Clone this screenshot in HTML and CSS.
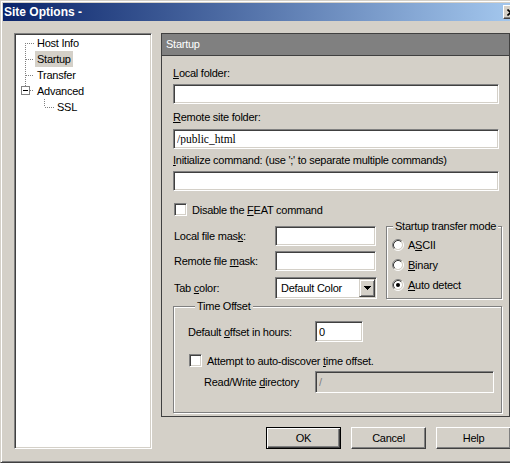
FILE: index.html
```html
<!DOCTYPE html>
<html>
<head>
<meta charset="utf-8">
<title>Site Options</title>
<link rel="stylesheet" href="styles.css">
</head>
<body>
<div class="window">
  <div class="titlebar">
    <span class="title">Site Options -</span>
    <span class="close"><svg width="8" height="7" viewBox="0 0 8 7"><path d="M0.5 0.5L7 6.5M7 0.5L0.5 6.5" stroke="#000" stroke-width="1.6" fill="none"/></svg></span>
  </div>
  <div class="main">
    <div class="tree">
      <div class="node">
        <svg class="gut" width="19" height="16" viewBox="0 0 19 16"><path d="M9.5 8V16M9 8.5H18" stroke="#808080" stroke-dasharray="1 1" fill="none" shape-rendering="crispEdges"/></svg>
        <span class="lbl">Host Info</span>
      </div>
      <div class="node">
        <svg class="gut" width="19" height="16" viewBox="0 0 19 16"><path d="M9.5 0V16M10 8.5H18" stroke="#808080" stroke-dasharray="1 1" fill="none" shape-rendering="crispEdges"/></svg>
        <span class="lbl sel">Startup</span>
      </div>
      <div class="node">
        <svg class="gut" width="19" height="16" viewBox="0 0 19 16"><path d="M9.5 0V16M10 8.5H18" stroke="#808080" stroke-dasharray="1 1" fill="none" shape-rendering="crispEdges"/></svg>
        <span class="lbl">Transfer</span>
      </div>
      <div class="node">
        <svg class="gut" width="19" height="16" viewBox="0 0 19 16"><path d="M9.5 0V3M14 7.5H18" stroke="#808080" stroke-dasharray="1 1" fill="none" shape-rendering="crispEdges"/><rect x="5.5" y="3.5" width="8" height="8" fill="#fff" stroke="#808080" shape-rendering="crispEdges"/><path d="M7 7.5H12" stroke="#000" shape-rendering="crispEdges"/></svg>
        <span class="lbl">Advanced</span>
      </div>
      <div class="node">
        <svg class="gut" width="39" height="16" viewBox="0 0 39 16"><path d="M28.5 0V8M29 8.5H38" stroke="#808080" stroke-dasharray="1 1" fill="none" shape-rendering="crispEdges"/></svg>
        <span class="lbl">SSL</span>
      </div>
    </div>

    <div class="right">
      <div class="panel">
        <div class="caption">Startup</div>
        <div class="pbody">
          <div class="lab l1"><u>L</u>ocal folder:</div>
          <input class="edit e1" type="text" value="">
          <div class="lab l2"><u>R</u>emote site folder:</div>
          <input class="edit e2 serif" type="text" value="/public_html">
          <div class="lab l3"><u>I</u>nitialize command: (use ';' to separate multiple commands)</div>
          <input class="edit e3" type="text" value="">

          <div class="chkrow feat"><span class="chk"></span><span>Disable the <u>F</u>EAT command</span></div>

          <div class="mid">
            <div class="masks">
              <div class="mlab">Local file mas<u>k</u>:</div>
              <input class="edit mask" type="text" value="">
              <div class="mlab">Remote file <u>m</u>ask:</div>
              <input class="edit mask" type="text" value="">
              <div class="mlab last">Tab <u>c</u>olor:</div>
              <div class="combo last">
                <span class="ctext">Default Color</span>
                <span class="cbtn"><svg width="7" height="4" viewBox="0 0 7 4"><path d="M0 0H7V1H6V2H5V3H4V4H3V3H2V2H1V1H0Z" fill="#000"/></svg></span>
              </div>
            </div>
            <fieldset class="group transfer">
              <legend>Startup transfer mode</legend>
              <div class="radrow first">
                <svg class="radio" width="12" height="12" viewBox="0 0 12 12"><circle cx="6" cy="6" r="4" fill="#fff"/><path d="M2.11 9.89A5.5 5.5 0 0 1 9.89 2.11" stroke="#808080" fill="none"/><path d="M9.89 2.11A5.5 5.5 0 0 1 2.11 9.89" stroke="#fff" fill="none"/><path d="M2.82 9.18A4.5 4.5 0 0 1 9.18 2.82" stroke="#404040" fill="none"/><path d="M9.18 2.82A4.5 4.5 0 0 1 2.82 9.18" stroke="#d4d0c8" fill="none"/></svg>
                <span>A<u>S</u>CII</span>
              </div>
              <div class="radrow">
                <svg class="radio" width="12" height="12" viewBox="0 0 12 12"><circle cx="6" cy="6" r="4" fill="#fff"/><path d="M2.11 9.89A5.5 5.5 0 0 1 9.89 2.11" stroke="#808080" fill="none"/><path d="M9.89 2.11A5.5 5.5 0 0 1 2.11 9.89" stroke="#fff" fill="none"/><path d="M2.82 9.18A4.5 4.5 0 0 1 9.18 2.82" stroke="#404040" fill="none"/><path d="M9.18 2.82A4.5 4.5 0 0 1 2.82 9.18" stroke="#d4d0c8" fill="none"/></svg>
                <span><u>B</u>inary</span>
              </div>
              <div class="radrow">
                <svg class="radio" width="12" height="12" viewBox="0 0 12 12"><circle cx="6" cy="6" r="4" fill="#fff"/><path d="M2.11 9.89A5.5 5.5 0 0 1 9.89 2.11" stroke="#808080" fill="none"/><path d="M9.89 2.11A5.5 5.5 0 0 1 2.11 9.89" stroke="#fff" fill="none"/><path d="M2.82 9.18A4.5 4.5 0 0 1 9.18 2.82" stroke="#404040" fill="none"/><path d="M9.18 2.82A4.5 4.5 0 0 1 2.82 9.18" stroke="#d4d0c8" fill="none"/><circle cx="6" cy="6" r="2" fill="#000"/></svg>
                <span><u>A</u>uto detect</span>
              </div>
            </fieldset>
          </div>

          <fieldset class="group time">
            <legend>Time Offset</legend>
            <div class="trow r1">
              <span class="tlab">Default <u>o</u>ffset in hours:</span>
              <input class="edit hours" type="text" value="0">
            </div>
            <div class="chkrow auto"><span class="chk"></span><span>Attempt to auto-discover <u>t</u>ime offset.</span></div>
            <div class="trow r3">
              <span class="tlab indent">Read/Write <u>d</u>irectory</span>
              <input class="edit dir" type="text" value="/" disabled>
            </div>
          </fieldset>
        </div>
      </div>
      <div class="buttons">
        <button class="btn def" type="button">OK</button>
        <button class="btn" type="button">Cancel</button>
        <button class="btn" type="button">Help</button>
      </div>
    </div>
  </div>
</div>
</body>
</html>
```

FILE: styles.css
```css
* { box-sizing: border-box; }

html, body {
  margin: 0;
  padding: 0;
  overflow: hidden;
  background: #d4d0c8;
}

body {
  width: 510px;
  height: 463px;
  font-family: "Liberation Sans", Arial, sans-serif;
  font-size: 11px;
  letter-spacing: -0.25px;
  color: #000;
}

u { text-decoration: underline; text-underline-offset: 1px; }

.window {
  width: 524px;
  height: 463px;
  padding: 2px;
  background: #d4d0c8;
  border: 1px solid;
  border-color: #d4d0c8 #404040 #404040 #d4d0c8;
  box-shadow: inset 1px 1px 0 #fff, inset -1px -1px 0 #808080;
}

.titlebar {
  height: 18px;
  display: flex;
  align-items: center;
  justify-content: space-between;
  padding: 0 2px 0 1px;
  background: linear-gradient(to right, #0a246a, #a6caf0);
}

.title {
  color: #fff;
  font-weight: bold;
  font-size: 12px;
  letter-spacing: 0;
  line-height: 18px;
  white-space: nowrap;
}

.close {
  width: 16px;
  height: 14px;
  display: flex;
  align-items: center;
  justify-content: center;
  background: #d4d0c8;
  border: 1px solid;
  border-color: #fff #404040 #404040 #fff;
  box-shadow: inset -1px -1px 0 #808080;
}

.main {
  display: flex;
  gap: 9px;
  padding: 12px 0 0 11px;
}

/* tree */
.tree {
  width: 138px;
  height: 416px;
  flex: none;
  background: #fff;
  padding: 1px 0 0 1px;
  border: 1px solid;
  border-color: #808080 #fff #fff #808080;
  box-shadow: inset 1px 1px 0 #404040, inset -1px -1px 0 #d4d0c8;
}

.node {
  height: 16px;
  display: flex;
  align-items: center;
}

.gut { display: block; flex: none; }

.lbl {
  height: 16px;
  line-height: 16px;
  padding: 0 2px;
  white-space: nowrap;
}

.lbl.sel { background: #d4d0c8; }

/* right column */
.right {
  width: 349px;
  flex: none;
  display: flex;
  flex-direction: column;
  gap: 10px;
}

.panel {
  height: 384px;
  border: 1px solid #404040;
}

.caption {
  height: 22px;
  line-height: 21px;
  padding-left: 4px;
  background: #808080;
  color: #fff;
  border-bottom: 1px solid #404040;
}

.pbody {
  padding: 0 7px 0 11px;
}

.lab {
  height: 13px;
  line-height: 13px;
  white-space: nowrap;
}
.l1 { margin-top: 11px; }
.l2 { margin-top: 7px; }
.l3 { margin-top: 5px; }

.edit {
  display: block;
  height: 20px;
  margin: 0;
  padding: 0 3px;
  font-family: "Liberation Sans", Arial, sans-serif;
  font-size: 11px;
  letter-spacing: -0.25px;
  color: #000;
  background: #fff;
  border: 1px solid;
  border-color: #808080 #fff #fff #808080;
  box-shadow: inset 1px 1px 0 #404040, inset -1px -1px 0 #d4d0c8;
  border-radius: 0;
  outline: none;
  -webkit-appearance: none;
  appearance: none;
}

.e1 { width: 326px; margin-top: 4px; }
.e2 { width: 326px; margin-top: 5px; }
.e3 { width: 326px; margin-top: 4px; }

.serif {
  font-family: "Liberation Serif", "Times New Roman", serif;
  font-size: 11.5px;
  letter-spacing: 0;
}

.chk {
  width: 13px;
  height: 13px;
  flex: none;
  background: #fff;
  border: 1px solid;
  border-color: #808080 #fff #fff #808080;
  box-shadow: inset 1px 1px 0 #404040, inset -1px -1px 0 #d4d0c8;
}

.chkrow {
  display: flex;
  align-items: center;
  gap: 5px;
  height: 13px;
  white-space: nowrap;
}

.feat { margin-top: 12px; padding-left: 1px; }

.mid {
  display: flex;
  gap: 9px;
  margin-top: 4px;
}

.masks {
  width: 204px;
  flex: none;
  padding-top: 6px;
  display: grid;
  grid-template-columns: 102px 102px;
  grid-template-rows: 20px 20px 22px;
  row-gap: 5px;
  align-items: center;
}

.mlab { white-space: nowrap; padding-left: 1px; }
.last { margin-top: 2px; }

.mask { width: 101px; height: 20px; }

.combo {
  width: 102px;
  height: 22px;
  display: flex;
  align-items: center;
  justify-content: space-between;
  padding: 1px;
  background: #fff;
  border: 1px solid;
  border-color: #808080 #fff #fff #808080;
  box-shadow: inset 1px 1px 0 #404040, inset -1px -1px 0 #d4d0c8;
}

.ctext { padding-left: 4px; white-space: nowrap; }

.cbtn {
  width: 16px;
  height: 18px;
  flex: none;
  display: flex;
  align-items: center;
  justify-content: center;
  background: #d4d0c8;
  border: 1px solid;
  border-color: #d4d0c8 #404040 #404040 #d4d0c8;
  box-shadow: inset 1px 1px 0 #fff, inset -1px -1px 0 #808080;
}

.group {
  margin: 0;
  padding: 0;
  min-width: 0;
  border: 1px solid #808080;
  box-shadow: 1px 1px 0 #fff, inset 1px 1px 0 #fff;
}

.group legend {
  padding: 0 2px;
  line-height: 13px;
  background: #d4d0c8;
  white-space: nowrap;
}

.transfer {
  width: 116px;
  flex: none;
  padding-bottom: 3px;
}
.transfer legend { margin-left: 6px; }

.radrow {
  height: 20px;
  display: flex;
  align-items: center;
  gap: 4px;
  padding-left: 5px;
  white-space: nowrap;
}
.radrow.first { margin-top: 2px; }
.radio { display: block; flex: none; }

.time {
  width: 329px;
  margin-top: 1px;
  padding: 0 0 19px 14px;
}
.time legend { margin-left: 7px; }

.trow {
  display: flex;
  align-items: center;
}
.r1 { margin-top: 8px; height: 21px; }
.r3 { margin-top: 4px; height: 22px; }

.tlab { width: 127px; flex: none; white-space: nowrap; }
.tlab.indent { padding-left: 16px; }

.hours { width: 48px; height: 21px; }
.dir {
  width: 179px;
  height: 22px;
  background: #d4d0c8;
  color: #808080;
}

.auto { margin-top: 12px; padding-left: 1px; }

/* buttons */
.buttons {
  display: flex;
  justify-content: flex-end;
  gap: 10px;
  margin-right: -1px;
}

.btn {
  width: 75px;
  height: 22px;
  margin: 0;
  padding: 0;
  font-family: "Liberation Sans", Arial, sans-serif;
  font-size: 11px;
  letter-spacing: -0.25px;
  color: #000;
  background: #d4d0c8;
  border: 1px solid;
  border-color: #fff #404040 #404040 #fff;
  box-shadow: inset -1px -1px 0 #808080;
  border-radius: 0;
  -webkit-appearance: none;
  appearance: none;
}

.btn.def {
  border-color: #000;
  box-shadow: inset 1px 1px 0 #fff, inset -1px -1px 0 #404040, inset -2px -2px 0 #808080;
}
```
